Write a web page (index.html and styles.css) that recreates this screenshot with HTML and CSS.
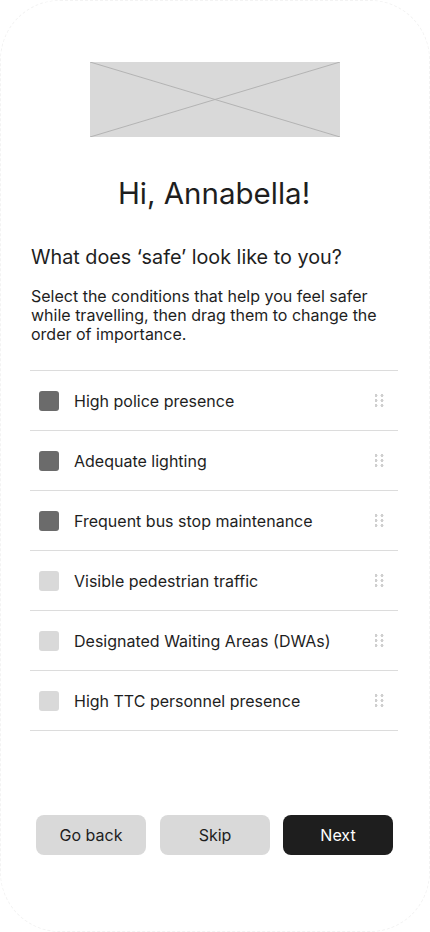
FILE: index.html
```html
<!DOCTYPE html>
<html lang="en">
<head>
<meta charset="UTF-8" />
<meta name="viewport" content="width=device-width, initial-scale=1" />
<title>Safety preferences</title>
<link rel="stylesheet" href="styles.css">
</head>
<body>

<div class="tela">
  <div class="imagem">
    <svg viewBox="0 0 250 75" preserveAspectRatio="none">
      <line x1="0" y1="0" x2="250" y2="75" />
      <line x1="250" y1="0" x2="0" y2="75" />
    </svg>
  </div>

  <h1 class="saudacao">Hi, Annabella!</h1>

  <h2 class="pergunta">What does ‘safe’ look like to you?</h2>
  <p class="instrucao">Select the conditions that help you feel safer while travelling, then drag them to change the order of importance.</p>

  <ul class="lista">
    <li><span class="caixa marcada"></span><span class="rotulo">High police presence</span><span class="alca"></span></li>
    <li><span class="caixa marcada"></span><span class="rotulo">Adequate lighting</span><span class="alca"></span></li>
    <li><span class="caixa marcada"></span><span class="rotulo">Frequent bus stop maintenance</span><span class="alca"></span></li>
    <li><span class="caixa"></span><span class="rotulo">Visible pedestrian traffic</span><span class="alca"></span></li>
    <li><span class="caixa"></span><span class="rotulo">Designated Waiting Areas (DWAs)</span><span class="alca"></span></li>
    <li><span class="caixa"></span><span class="rotulo">High TTC personnel presence</span><span class="alca"></span></li>
  </ul>

  <div class="botoes">
    <button class="botao">Go back</button>
    <button class="botao">Skip</button>
    <button class="botao escuro">Next</button>
  </div>
</div>

</body>
</html>
```

FILE: styles.css
```css
body, html {
  margin: 0; padding: 0;
  background: #fff;
  font-family: Inter, 'Noto Sans', sans-serif;
  color: #1e1e1e;
}

.tela {
  box-sizing: border-box;
  width: 430px;
  height: 932px;
  border: 1px dashed #f3f3f3;
  border-radius: 60px;
  padding: 61px 31px 0 29px;
  display: flex;
  flex-direction: column;
}

.imagem {
  width: 250px;
  height: 75px;
  margin: 0 0 0 60px;
  background: #d9d9d9;
}
.imagem svg {
  display: block;
  width: 100%; height: 100%;
}
.imagem line {
  stroke: #b3b3b3;
  stroke-width: 1;
}

.saudacao {
  margin: 38px 0 0;
  text-align: center;
  font-size: 29.5px;
  font-weight: 400;
  line-height: 36px;
}

.pergunta {
  margin: 34px 0 0 1px;
  font-size: 19.8px;
  font-weight: 400;
  line-height: 24px;
}

.instrucao {
  margin: 18px 0 0 1px;
  font-size: 16px;
  line-height: 19px;
}

.lista {
  list-style: none;
  margin: 26px 0 0;
  padding: 0;
  border-top: 1px solid #dcdcdc;
}
.lista li {
  display: flex;
  align-items: center;
  height: 59px;
  border-bottom: 1px solid #dcdcdc;
  padding: 0 14px 0 9px;
}

.caixa {
  width: 20px; height: 20px;
  border-radius: 3px;
  background: #d9d9d9;
  flex-shrink: 0;
}
.caixa.marcada {
  background: #6b6b6b;
}

.rotulo {
  flex: 1;
  margin-left: 15px;
  font-size: 16px;
}

/* alça de arrastar: 2 x 3 pontinhos */
.alca {
  width: 9px; height: 13px;
  background-image: radial-gradient(circle, #cfcfcf 1.4px, transparent 1.6px);
  background-size: 6px 5px;
  background-position: -2px -1px;
}

.botoes {
  margin-top: auto;
  margin-bottom: 76px;
  display: flex;
  gap: 14px;
  padding-left: 6px;
}
.botao {
  width: 110px;
  height: 40px;
  border: none;
  border-radius: 8px;
  background: #d9d9d9;
  color: #1e1e1e;
  font-family: Inter, sans-serif;
  font-size: 16px;
  cursor: pointer;
}
.botao.escuro {
  margin-left: -1px;
  background: #1e1e1e;
  color: #fff;
}
```
